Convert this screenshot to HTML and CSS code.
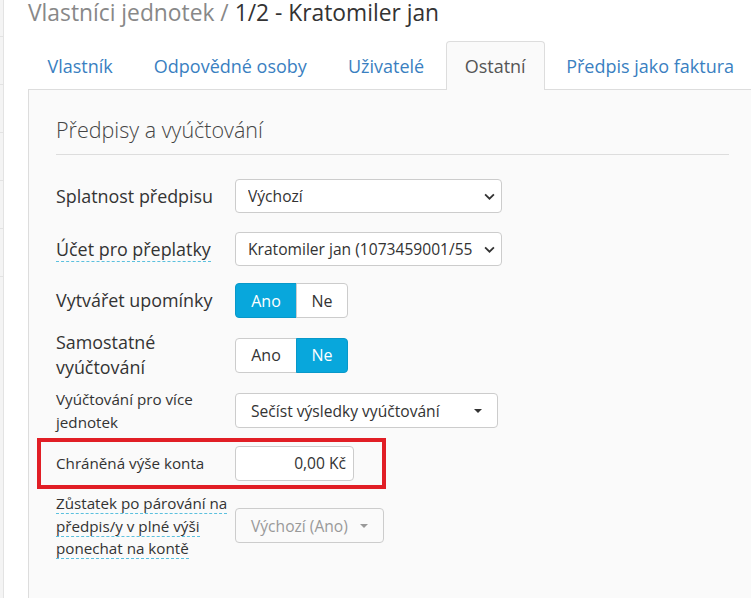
FILE: index.html
```html
<!DOCTYPE html>
<html lang="cs">
<head>
<meta charset="utf-8">
<link rel="stylesheet" href="styles.css">
</head>
<body>
<div class="layout">
  <aside class="side">
    <div class="side-item"></div>
    <div class="side-item"></div>
    <div class="side-item"></div>
    <div class="side-item"></div>
    <div class="side-item"></div>
    <div class="side-item"></div>
  </aside>
  <main class="main">
    <h1 class="title"><span class="crumb">Vlastníci jednotek /</span> 1/2 - Kratomiler jan</h1>
    <ul class="tabs">
      <li class="tab">Vlastník</li>
      <li class="tab">Odpovědné osoby</li>
      <li class="tab">Uživatelé</li>
      <li class="tab active">Ostatní</li>
      <li class="tab">Předpis jako faktura</li>
    </ul>
    <section class="panel">
      <h2 class="legend">Předpisy a vyúčtování</h2>
      <div class="row r1">
        <label class="lbl big">Splatnost předpisu</label>
        <div class="select native w267"><span>Výchozí</span><svg class="chev" viewBox="0 0 10 6" width="11" height="7"><path d="M1 1l4 4 4-4" fill="none" stroke="#333" stroke-width="1.6"/></svg></div>
      </div>
      <div class="row r2">
        <label class="lbl big"><span class="dashed">Účet pro přeplatky</span></label>
        <div class="select native w267"><span>Kratomiler jan (1073459001/55</span><svg class="chev" viewBox="0 0 10 6" width="11" height="7"><path d="M1 1l4 4 4-4" fill="none" stroke="#333" stroke-width="1.6"/></svg></div>
      </div>
      <div class="row r3">
        <label class="lbl big">Vytvářet upomínky</label>
        <div class="btn-group"><span class="btn on b-ano">Ano</span><span class="btn b-ne">Ne</span></div>
      </div>
      <div class="row r4">
        <label class="lbl big">Samostatné vyúčtování</label>
        <div class="btn-group"><span class="btn b-ano">Ano</span><span class="btn on b-ne">Ne</span></div>
      </div>
      <div class="row r5">
        <label class="lbl small">Vyúčtování pro více jednotek</label>
        <div class="select bs w263"><span>Sečíst výsledky vyúčtování</span><span class="caret"></span></div>
      </div>
      <div class="row r6 highlight">
        <label class="lbl small">Chráněná výše konta</label>
        <div class="input">0,00 Kč</div>
      </div>
      <div class="row r7">
        <label class="lbl small"><span class="dashed">Zůstatek po párování na předpis/y v plné výši ponechat na kontě</span></label>
        <div class="select bs disabled w149"><span>Výchozí (Ano)</span><span class="caret"></span></div>
      </div>
    </section>
  </main>
</div>
</body>
</html>
```
FILE: styles.css
```css
* { box-sizing: border-box; }
html, body { margin: 0; padding: 0; background: #fff; }
body { font-family: "Open Sans", "DejaVu Sans", sans-serif; color: #333; overflow: hidden; }
.layout { display: flex; width: 751px; height: 598px; }
.side { width: 4px; flex: none; background: #f4f4f4; border-right: 1px solid #e3e3e3; padding-top: 36px; }
.side-item { height: 48px; border-top: 1px solid #e3e3e3; }
.main { flex: 1; padding-left: 24px; min-width: 0; }
.title { margin: 0; height: 41px; font-size: 22.8px; font-weight: 400; line-height: 26px; color: #333; white-space: nowrap; }
.crumb { color: #888; }
.tabs { list-style: none; margin: 0; padding: 0; display: flex; height: 49px; border-bottom: 1px solid #ddd; }
.tab { padding: 0 18.5px; margin-right: 2px; font-size: 18px; line-height: 49px; color: #3a7fc1; border: 1px solid transparent; border-bottom: 0; border-radius: 4px 4px 0 0; white-space: nowrap; }
.tab.active { color: #555; background: #fafafa; border-color: #ddd; height: 49px; padding: 0 18px; }
.panel { background: #fafafa; border-left: 1px solid #ddd; width: 760px; height: 520px; padding: 24px 0 0 27px; }
.legend { margin: 0; width: 673px; font-size: 21.5px; font-weight: 300; color: #444; line-height: 32px; padding-bottom: 8px; border-bottom: 1px solid #ddd; }
.row { display: flex; align-items: center; width: 673px; }
.lbl { width: 179px; flex: none; }
.lbl.big { font-size: 17.9px; line-height: 25px; color: #333; }
.lbl.small { font-size: 15.2px; line-height: 22.5px; color: #333; padding-right: 4px; }
.dashed { border-bottom: 1px dashed #5bc0de; }
.r1 { margin-top: 24px; }
.r2 { margin-top: 19px; }
.r3 { margin-top: 17px; }
.r4 { margin-top: 12px; }
.r4 .lbl { padding-right: 60px; }
.r5 { margin-top: 8px; }
.r6 { margin-top: 5px; }
.r7 { margin-top: 3px; }
.select { height: 34px; background: #fff; border: 1px solid #ccc; border-radius: 4px; display: flex; align-items: center; justify-content: space-between; padding: 0 12px; font-size: 15.6px; color: #333; white-space: nowrap; overflow: hidden; }
.select.native { padding-right: 6px; }
.select.native span { overflow: hidden; }
.w267 { width: 267px; }
.w263 { width: 263px; }
.w149 { width: 149px; }
.select.bs { height: 35px; padding-left: 15px; padding-right: 15px; }
.select.disabled { background: #fafafa; color: #999; }
.select.disabled .caret { border-top-color: #999; }
.caret { width: 0; height: 0; border-left: 4px solid transparent; border-right: 4px solid transparent; border-top: 4px solid #333; flex: none; }
.btn-group { display: flex; }
.btn { height: 35px; display: flex; align-items: center; justify-content: center; font-size: 16px; background: #fff; border: 1px solid #ccc; color: #333; }
.b-ano { width: 62px; border-radius: 4px 0 0 4px; }
.b-ne { width: 52px; border-radius: 0 4px 4px 0; margin-left: -1px; }
.btn.on { background: #08a7dc; border-color: #0898c9; color: #fff; }
.highlight { border: 4px solid #e11e25; margin-left: -19px; width: 349px; padding: 4px 0 4px 15px; }
.input { width: 119px; height: 35px; background: #fff; border: 1px solid #ccc; border-radius: 4px; font-size: 15.6px; text-align: right; line-height: 33px; padding-right: 7px; }
```
